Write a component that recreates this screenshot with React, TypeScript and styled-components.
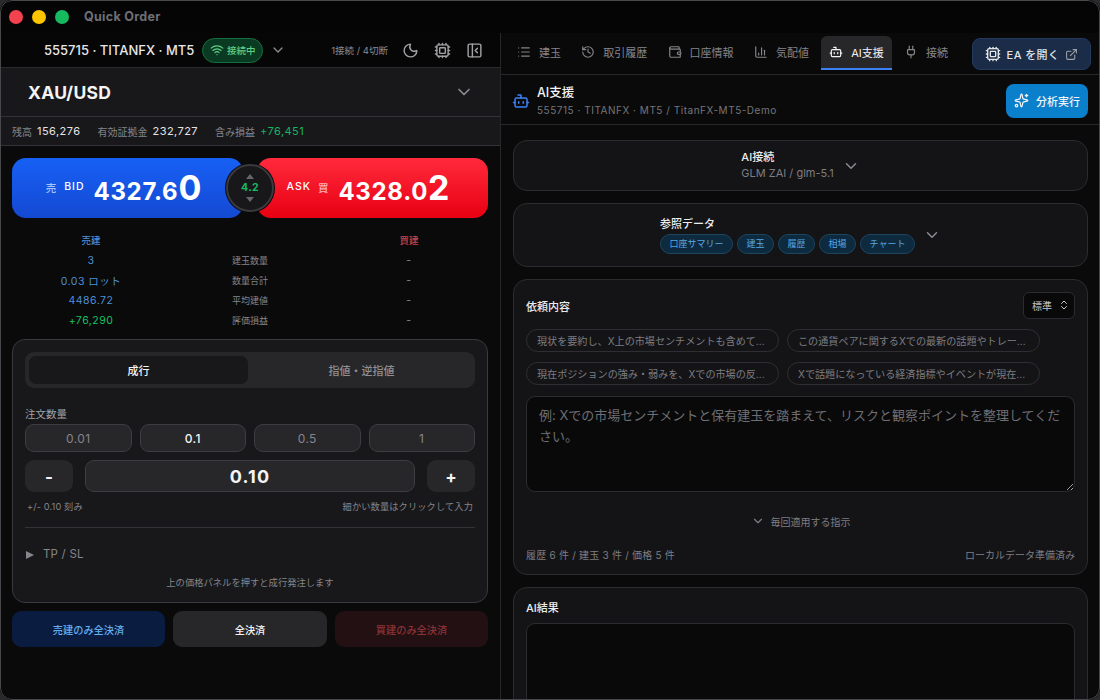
import React from "react";
import styled, { createGlobalStyle } from "styled-components";
import {
  Wifi, ChevronDown, Moon, Cpu, PanelLeftClose, List, History, Wallet, ChartColumn, Bot, Plug,
  ExternalLink, Sparkles, ChevronsUpDown,
} from "lucide-react";

const FONT = `Inter, "Noto Sans CJK JP", "Noto Sans", sans-serif`;

const Global = createGlobalStyle`
  html, body { margin: 0; padding: 0; background: #2a2a2d; height: 100%; overflow: hidden; }
  #root { height: 100%; }
  * { box-sizing: border-box; }
`;

const Win = styled.div`
  position: relative; width: 1100px; height: 700px; background: #0a0a0b; border-radius: 12px;
  overflow: hidden; display: flex; flex-direction: column; font-family: ${FONT}; color: #fafafa;
  &::after {
    content: ""; position: absolute; inset: 0; border: 1px solid #48484c; border-radius: 12px; pointer-events: none;
  }
`;
const TitleBar = styled.div`
  height: 33px; flex: none; display: flex; align-items: center; padding-left: 9px; background: #050506;
`;
const Light = styled.span<{ $c: string }>`
  width: 14px; height: 14px; border-radius: 50%; background: ${p => p.$c}; margin-right: 9px; flex: none;
`;
const WinTitle = styled.span`
  margin-left: 6px; font-size: 12.5px; font-weight: 700; color: #6f6f74; letter-spacing: 0.3px;
`;
const Body = styled.div`
  flex: 1; min-height: 0; display: grid; grid-template-columns: 501px 1fr;
`;
const Left = styled.section`
  border-right: 1px solid #27272a; display: flex; flex-direction: column; min-height: 0;
`;
const AccountBar = styled.div`
  height: 35px; flex: none; padding: 0 17px 0 44px; display: flex; align-items: center;
  background: #060607; border-bottom: 1px solid #2b2b2f;
`;
const AccountName = styled.span`
  font-size: 13px; font-weight: 500; color: #e6e6e8;
`;
const ConnBadge = styled.span`
  margin-left: 8px; height: 25px; width: 61px; border-radius: 13px; background: #0b3a22; border: 1px solid #14703f;
  display: flex; align-items: center; justify-content: center; gap: 3px;
  font-size: 9.5px; color: #5fcf87; font-weight: 500;
`;
const Muted = styled.span`
  display: inline-flex; color: #8b8b90;
`;
const BadgeChevron = styled(Muted)`
  margin-left: 7px;
`;
const ConnCount = styled.span`
  margin-left: auto; font-size: 9.5px; color: #8b8b90; margin-right: 14px;
`;
const IconGroup = styled.div`
  display: flex; gap: 15px; color: #a1a1a6; align-items: center;
`;
const SymbolBar = styled.div`
  height: 49px; flex: none; background: #18181b; border-bottom: 1px solid #333337;
  display: flex; align-items: center; justify-content: space-between; padding: 0 26px 0 28px;
`;
const SymbolName = styled.span`
  font-size: 17.5px; font-weight: 700; letter-spacing: 0.3px; color: #f4f4f5;
`;
const BalanceBar = styled.div`
  height: 29px; flex: none; background: #18181b; border-bottom: 1px solid #333337;
  display: flex; align-items: center; padding: 0 12px; gap: 17px; font-size: 11px;
`;
const Stat = styled.span`
  display: inline-flex; align-items: center; gap: 5px; color: #e4e4e7; letter-spacing: 0.45px;
`;
const StatLabel = styled.span`
  color: #85858a; letter-spacing: 0; font-size: 10px;
`;
const Green = styled.span`
  color: #16b364;
`;
const LeftContent = styled.div`
  flex: 1; min-height: 0; padding: 12px 12px 0; display: flex; flex-direction: column;
`;
const PriceRow = styled.div`
  position: relative; display: grid; grid-template-columns: 1fr 1fr; gap: 14px; height: 60px; flex: none;
`;
const PricePanel = styled.button<{ $side: "bid" | "ask" }>`
  border: 0; border-radius: 14px; color: #fff; font-family: ${FONT}; display: flex; align-items: center; justify-content: center; gap: 9px;
  background: ${p => p.$side === "bid" ? "linear-gradient(#1760f5, #1449d2)" : "linear-gradient(#ff2a3c, #e70012)"};
  padding: ${p => p.$side === "bid" ? "0 8px 0 0" : "0 9px 0 0"};
`;
const PriceLabel = styled.span<{ $side: "bid" | "ask" }>`
  font-size: 10.5px; font-weight: 500; letter-spacing: 1px; margin-top: -2px; display: inline-flex; gap: 7px;
  span { color: ${p => p.$side === "bid" ? "#a9c4fb" : "#ffb0b5"}; }
`;
const PriceValue = styled.span`
  font-size: 24px; font-weight: 700; line-height: 1; display: inline-flex; align-items: baseline; letter-spacing: 0.7px;
`;
const PriceBig = styled.span`
  font-size: 34px; font-weight: 700; letter-spacing: 0;
`;
const Spread = styled.div`
  position: absolute; left: 50%; top: 50%; transform: translate(-50%, -50%);
  width: 48px; height: 48px; border-radius: 50%; background: #18181b; border: 2px solid #3a3a3e;
  box-shadow: 0 0 0 1px #0a0a0b; display: flex; flex-direction: column; align-items: center; justify-content: center; gap: 4px;
`;
const Tri = styled.span<{ $up?: boolean }>`
  width: 0; height: 0; border-left: 4px solid transparent; border-right: 4px solid transparent;
  ${p => p.$up ? "border-bottom: 5px solid #65656a;" : "border-top: 5px solid #65656a;"}
`;
const SpreadVal = styled.span`
  font-size: 10.5px; font-weight: 700; color: #18b965; line-height: 1; letter-spacing: 0.3px;
`;
const PosTable = styled.div`
  margin-top: 12px; display: grid; grid-template-columns: 158px 1fr 158px; grid-auto-rows: 20px; align-items: center; text-align: center; flex: none;
`;
const HeadCell = styled.span<{ $c?: string }>`
  font-size: 9.5px; color: ${p => p.$c}; font-weight: 500;
`;
const ValCell = styled.span<{ $c?: string }>`
  font-size: 10.5px; color: ${p => p.$c || "#8a8a8f"}; letter-spacing: 0.5px;
`;
const RowLabel = styled.span`
  font-size: 9px; color: #85858a;
`;
const OrderCard = styled.div`
  margin-top: 9px; flex: none; height: 264px; background: #18181b; border: 1px solid #3a3a3e; border-radius: 13px; padding: 12px;
  display: flex; flex-direction: column;
`;
const ModeTabs = styled.div`
  height: 36px; background: #27272a; border-radius: 9px; padding: 4px 0 4px 4px; display: grid; grid-template-columns: 219px 1fr;
`;
const ModeTab = styled.button<{ $active?: boolean }>`
  border: 0; border-radius: 7px; font-family: ${FONT}; font-size: 11px; font-weight: 500; cursor: pointer;
  background: ${p => p.$active ? "#18181b" : "transparent"}; color: ${p => p.$active ? "#f4f4f5" : "#8f8f94"};
`;
const FieldLabel = styled.div`
  margin-top: 20px; font-size: 10.5px; color: #a1a1a6; line-height: 13px;
`;
const Presets = styled.div`
  margin-top: 3px; display: grid; grid-template-columns: repeat(4, 1fr); gap: 8px;
`;
const Preset = styled.button<{ $active?: boolean }>`
  height: 28px; border-radius: 9px; border: 1px solid #3d3d42; background: #27272a; font-family: ${FONT}; font-size: 12px; letter-spacing: 0.4px;
  color: ${p => p.$active ? "#f4f4f5" : "#85858a"}; font-weight: ${p => p.$active ? 500 : 400};
`;
const Stepper = styled.div`
  margin-top: 8px; display: grid; grid-template-columns: 48px 1fr 48px; gap: 12px; height: 32px;
`;
const StepBtn = styled.button`
  border: 0; border-radius: 9px; background: #27272a; color: #f4f4f5; font-family: ${FONT}; font-size: 17px; font-weight: 700; padding: 2px 0 0;
`;
const LotInput = styled.button`
  border: 1px solid #3d3d42; border-radius: 9px; background: #27272a; color: #f4f4f5; font-family: ${FONT}; font-size: 18px; font-weight: 700; letter-spacing: 1.2px;
`;
const Hints = styled.div`
  margin-top: 9px; padding: 0 2px; display: flex; justify-content: space-between; font-size: 9.2px; color: #85858a; line-height: 12px; letter-spacing: 0.15px;
`;
const Rule = styled.div`
  margin-top: 14px; height: 1px; background: #333337; flex: none;
`;
const TpSl = styled.div`
  margin-top: 19px; display: flex; align-items: center; gap: 9px; font-size: 11.5px; color: #85858a; padding-left: 1px; line-height: 15px; letter-spacing: 0.2px;
`;
const Caret = styled.span`
  width: 0; height: 0; border-left: 8px solid #85858a; border-top: 4px solid transparent; border-bottom: 4px solid transparent;
`;
const OrderFoot = styled.div`
  margin-top: 15px; text-align: center; font-size: 9.3px; color: #85858a; line-height: 12px;
`;
const CloseRow = styled.div`
  margin-top: 8px; display: grid; grid-template-columns: 153px 154px 153px; gap: 8px; height: 36px; flex: none;
`;
const CloseBtn = styled.button<{ $bg: string; $c: string }>`
  border: 0; border-radius: 9px; background: ${p => p.$bg}; color: ${p => p.$c}; font-family: ${FONT}; font-size: 10.2px; font-weight: 500;
`;
const Right = styled.section`
  display: flex; flex-direction: column; min-height: 0; overflow: hidden;
`;
const TabBar = styled.div`
  height: 42px; flex: none; border-bottom: 1px solid #27272a; display: flex; align-items: flex-start; gap: 4.3px; padding: 3px 9px 0 8px; background: #09090a;
`;
const Tab = styled.div<{ $active?: boolean }>`
  height: 34px; padding: 0 8px; display: flex; align-items: center; gap: 8px; font-size: 11px;
  color: ${p => p.$active ? "#f4f4f5" : "#85858a"}; background: ${p => p.$active ? "#27272a" : "transparent"};
  border-radius: 6px 6px 0 0; border-bottom: 2px solid ${p => p.$active ? "#3b82f6" : "transparent"}; white-space: nowrap;
`;
const EaButton = styled.button`
  margin-left: auto; margin-top: 2px; height: 32px; width: 119px; border-radius: 8px; background: #1a2c47; border: 1px solid #223a5c;
  color: #e4e4e7; font-family: ${FONT}; font-size: 11px; font-weight: 500; letter-spacing: 0.4px; display: flex; align-items: center; justify-content: center; gap: 6px;
`;
const AiHeader = styled.div`
  height: 50px; flex: none; border-bottom: 1px solid #27272a; padding: 2px 12px 0 11px; display: flex; align-items: center; gap: 7px;
`;
const AiTitles = styled.div`
  flex: 1; display: flex; flex-direction: column; gap: 2px;
`;
const AiTitle = styled.div`
  font-size: 12.5px; font-weight: 500; color: #f4f4f5; line-height: 16px;
`;
const AiSub = styled.div`
  font-size: 10px; color: #75757a; line-height: 14px; letter-spacing: 0.52px;
`;
const RunBtn = styled.button`
  width: 82px; height: 34px; border: 0; border-radius: 8px; background: #0a80cc; color: #f4f4f5; font-family: ${FONT}; font-size: 11px; font-weight: 500;
  display: flex; align-items: center; justify-content: center; gap: 7px; padding: 0;
`;
const Scroll = styled.div`
  flex: 1; min-height: 0; overflow: hidden; padding: 15px 12px 0 12px; display: flex; flex-direction: column; gap: 12px;
`;
const Card = styled.div`
  flex: none; background: #141417; border: 1px solid #2c2c30; border-radius: 14px;
`;
const CollapseCard = styled(Card)<{ $h: number }>`
  height: ${p => p.$h}px; display: flex; align-items: center; justify-content: center; gap: 8px;
`;
const CollapseText = styled.div<{ $lift: number }>`
  display: flex; flex-direction: column; align-items: flex-start; margin-top: ${p => p.$lift}px;
`;
const CardTitle = styled.div`
  font-size: 11px; font-weight: 500; color: #ececee; line-height: 16px;
`;
const ReqTitle = styled(CardTitle)`
  margin-top: 3px;
`;
const CardSub = styled.div`
  font-size: 11px; color: #7d7d82; line-height: 17px;
`;
const ChipRow = styled.div`
  display: flex; gap: 4px; margin-top: 2px;
`;
const DataChip = styled.span`
  height: 20px; padding: 0 8.5px; border-radius: 10px; background: #0e2a3e; border: 1px solid #1c4560; color: #58a8e4;
  font-size: 9px; display: flex; align-items: center; white-space: nowrap;
`;
const RequestCard = styled(Card)`
  height: 296px; padding: 11px 12px 0; display: flex; flex-direction: column;
`;
const ReqHead = styled.div`
  display: flex; justify-content: space-between; align-items: center; height: 28px;
`;
const SelectBox = styled.div`
  width: 52px; height: 27px; border: 1px solid #2c2c30; border-radius: 6px; background: #09090a; color: #c8c8cc; font-size: 10px;
  display: flex; align-items: center; justify-content: space-between; padding: 0 4px 0 8px;
`;
const Prompts = styled.div`
  margin-top: 10px; display: grid; grid-template-columns: 253px 253px; gap: 10px 8px;
`;
const Prompt = styled.button`
  height: 23px; border-radius: 12px; border: 1px solid #2f2f33; background: transparent; color: #7d7d82; font-family: ${FONT}; font-size: 10.1px;
  padding: 0 10px; white-space: nowrap; text-align: left;
`;
const Area = styled.textarea`
  margin-top: 11px; width: 100%; height: 96px; flex: none; display: block; background: #09090a; border: 1px solid #2c2c30; border-radius: 9px; color: #e4e4e7;
  padding: 8px 12px; font-family: ${FONT}; font-size: 13px; line-height: 21px; outline: none; resize: vertical;
  &::placeholder { color: #6e6e74; }
`;
const Always = styled.div`
  margin-top: 21px; height: 16px; display: flex; align-items: center; justify-content: center; gap: 6px; font-size: 10px; color: #7d7d82;
`;
const ReqFoot = styled.div`
  margin-top: 19px; display: flex; justify-content: space-between; font-size: 10px; color: #7d7d82; line-height: 14px;
`;
const FootCounts = styled.span`
  letter-spacing: 0.22px;
`;
const ResultCard = styled(Card)`
  height: 200px; padding: 12px;
`;
const ResultBox = styled.div`
  margin-top: 7px; height: 170px; background: #09090a; border: 1px solid #2c2c30; border-radius: 9px;
`;

const TABS = [
  { label: "建玉", Icon: List },
  { label: "取引履歴", Icon: History },
  { label: "口座情報", Icon: Wallet },
  { label: "気配値", Icon: ChartColumn },
  { label: "AI支援", Icon: Bot, active: true },
  { label: "接続", Icon: Plug },
];

const ROWS: [string, string, string?][] = [
  ["3", "建玉数量"],
  ["0.03 ロット", "数量合計"],
  ["4486.72", "平均建値"],
  ["+76,290", "評価損益", "#16c265"],
];

export default function App() {
  return (
    <Win>
      <Global />
      <TitleBar>
        <Light $c="#f5424f" /><Light $c="#fdc400" /><Light $c="#16b95e" />
        <WinTitle>Quick Order</WinTitle>
      </TitleBar>
      <Body>
        <Left>
          <AccountBar>
            <AccountName>555715 · TITANFX · MT5</AccountName>
            <ConnBadge><Wifi size={14} />接続中</ConnBadge>
            <BadgeChevron><ChevronDown size={16} /></BadgeChevron>
            <ConnCount>1接続 / 4切断</ConnCount>
            <IconGroup>
              <Moon size={17} /><Cpu size={17} /><PanelLeftClose size={17} />
            </IconGroup>
          </AccountBar>
          <SymbolBar>
            <SymbolName>XAU/USD</SymbolName>
            <Muted><ChevronDown size={20} /></Muted>
          </SymbolBar>
          <BalanceBar>
            <Stat><StatLabel>残高</StatLabel>156,276</Stat>
            <Stat><StatLabel>有効証拠金</StatLabel>232,727</Stat>
            <Stat><StatLabel>含み損益</StatLabel><Green>+76,451</Green></Stat>
          </BalanceBar>
          <LeftContent>
            <PriceRow>
              <PricePanel $side="bid">
                <PriceLabel $side="bid"><span>売</span>BID</PriceLabel>
                <PriceValue>4327.6<PriceBig>0</PriceBig></PriceValue>
              </PricePanel>
              <PricePanel $side="ask">
                <PriceLabel $side="ask">ASK<span>買</span></PriceLabel>
                <PriceValue>4328.0<PriceBig>2</PriceBig></PriceValue>
              </PricePanel>
              <Spread><Tri $up /><SpreadVal>4.2</SpreadVal><Tri /></Spread>
            </PriceRow>
            <PosTable>
              <HeadCell $c="#4d8fd6">売建</HeadCell><span /><HeadCell $c="#c8444c">買建</HeadCell>
              {ROWS.map(([v, l, c]) => (
                <React.Fragment key={l}>
                  <ValCell $c={c || "#4d8fd6"}>{v}</ValCell>
                  <RowLabel>{l}</RowLabel>
                  <ValCell>-</ValCell>
                </React.Fragment>
              ))}
            </PosTable>
            <OrderCard>
              <ModeTabs>
                <ModeTab $active>成行</ModeTab>
                <ModeTab>指値・逆指値</ModeTab>
              </ModeTabs>
              <FieldLabel>注文数量</FieldLabel>
              <Presets>
                <Preset>0.01</Preset>
                <Preset $active>0.1</Preset>
                <Preset>0.5</Preset>
                <Preset>1</Preset>
              </Presets>
              <Stepper>
                <StepBtn>-</StepBtn>
                <LotInput>0.10</LotInput>
                <StepBtn>+</StepBtn>
              </Stepper>
              <Hints><span>+/- 0.10 刻み</span><span>細かい数量はクリックして入力</span></Hints>
              <Rule />
              <TpSl><Caret />TP / SL</TpSl>
              <OrderFoot>上の価格パネルを押すと成行発注します</OrderFoot>
            </OrderCard>
            <CloseRow>
              <CloseBtn $bg="#0a1c40" $c="#63aeee">売建のみ全決済</CloseBtn>
              <CloseBtn $bg="#27272a" $c="#f4f4f5">全決済</CloseBtn>
              <CloseBtn $bg="#221012" $c="#8a3236">買建のみ全決済</CloseBtn>
            </CloseRow>
          </LeftContent>
        </Left>
        <Right>
          <TabBar>
            {TABS.map(({ label, Icon, active }) => (
              <Tab key={label} $active={active}><Icon size={14} />{label}</Tab>
            ))}
            <EaButton><Cpu size={16} />EA を開く<ExternalLink size={13} color="#a1a1a6" /></EaButton>
          </TabBar>
          <AiHeader>
            <Bot size={18} color="#3b82f6" />
            <AiTitles>
              <AiTitle>AI支援</AiTitle>
              <AiSub>555715 · TITANFX · MT5 / TitanFX-MT5-Demo</AiSub>
            </AiTitles>
            <RunBtn><Sparkles size={15} />分析実行</RunBtn>
          </AiHeader>
          <Scroll>
            <CollapseCard $h={51}>
              <CollapseText $lift={0}>
                <CardTitle>AI接続</CardTitle>
                <CardSub>GLM ZAI / glm-5.1</CardSub>
              </CollapseText>
              <Muted><ChevronDown size={18} /></Muted>
            </CollapseCard>
            <CollapseCard $h={64}>
              <CollapseText $lift={-1}>
                <CardTitle>参照データ</CardTitle>
                <ChipRow>
                  {["口座サマリー", "建玉", "履歴", "相場", "チャート"].map(c => <DataChip key={c}>{c}</DataChip>)}
                </ChipRow>
              </CollapseText>
              <Muted><ChevronDown size={18} /></Muted>
            </CollapseCard>
            <RequestCard>
              <ReqHead>
                <ReqTitle>依頼内容</ReqTitle>
                <SelectBox>標準<ChevronsUpDown size={12} /></SelectBox>
              </ReqHead>
              <Prompts>
                <Prompt>現状を要約し、X上の市場センチメントも含めて...</Prompt>
                <Prompt>この通貨ペアに関するXでの最新の話題やトレー...</Prompt>
                <Prompt>現在ポジションの強み・弱みを、Xでの市場の反...</Prompt>
                <Prompt>Xで話題になっている経済指標やイベントが現在...</Prompt>
              </Prompts>
              <Area placeholder="例: Xでの市場センチメントと保有建玉を踏まえて、リスクと観察ポイントを整理してください。" />
              <Always><ChevronDown size={14} />毎回適用する指示</Always>
              <ReqFoot><FootCounts>履歴 6 件 / 建玉 3 件 / 価格 5 件</FootCounts><span>ローカルデータ準備済み</span></ReqFoot>
            </RequestCard>
            <ResultCard>
              <CardTitle>AI結果</CardTitle>
              <ResultBox />
            </ResultCard>
          </Scroll>
        </Right>
      </Body>
    </Win>
  );
}
